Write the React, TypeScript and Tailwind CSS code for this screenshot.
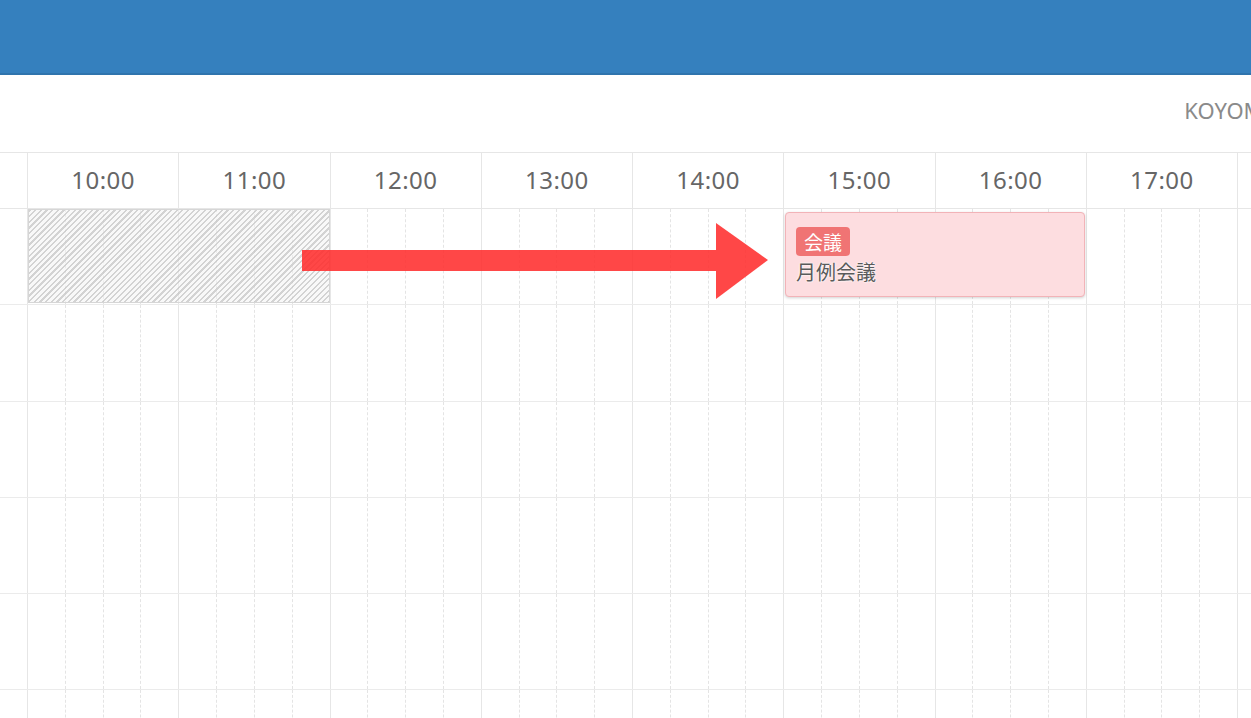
const HOURS = ["10:00", "11:00", "12:00", "13:00", "14:00", "15:00", "16:00", "17:00", ""];
const ROWS = [0, 1, 2, 3, 4, 5];

function HourCell({ quarters }: { quarters: boolean }) {
  return (
    <div className="flex h-full w-[151.25px] shrink-0 border-r border-[#e6e6e6]">
      {quarters &&
        [0, 1, 2, 3].map((q) => (
          <div
            key={q}
            className={
              q < 3
                ? "h-full flex-1 border-r border-dashed border-[#e4e4e4]"
                : "h-full flex-1"
            }
          />
        ))}
    </div>
  );
}

function Arrow() {
  return (
    <svg
      className="pointer-events-none absolute left-[302px] top-[13px] z-20"
      width="467"
      height="78"
      viewBox="0 0 467 78"
    >
      <g fill="#ff2e2e" fillOpacity="0.88">
        <rect x="0" y="28" width="414" height="21" />
        <polygon points="414,1 466,38 414,77" />
      </g>
    </svg>
  );
}

export default function App() {
  return (
    <div className="h-[718px] w-[1251px] overflow-hidden bg-white font-['Noto_Sans','Noto_Sans_CJK_JP',sans-serif]">
      <div className="h-[75px] border-b-2 border-[#2f74ad] bg-[#3580be]" />

      <div className="flex h-[77px] items-center justify-end overflow-hidden pb-[6px]">
        <span className="mr-[-20px] whitespace-nowrap text-[22px] text-[#8a8a8a]">
          KOYOMI
        </span>
      </div>

      <div className="flex h-[57px] border-y border-[#e6e6e6]">
        <div className="h-full w-[28px] shrink-0 border-r border-[#e6e6e6]" />
        {HOURS.map((h, i) => (
          <div
            key={i}
            className="flex h-full w-[151.25px] shrink-0 items-center justify-center border-r border-[#e6e6e6] pb-[2px] text-[24px] tracking-[0.5px] text-[#666]"
          >
            {h}
          </div>
        ))}
      </div>

      {ROWS.map((r) => (
        <div
          key={r}
          className="relative flex h-[96.3px] border-b border-[#ebebeb]"
        >
          <div className="h-full w-[28px] shrink-0 border-r border-[#e6e6e6]" />
          {HOURS.map((_, i) => (
            <HourCell key={i} quarters />
          ))}

          {r === 0 && (
            <>
              <div className="absolute left-[28px] top-0 h-[94px] w-[302px] border border-[#d6d6d6] bg-[repeating-linear-gradient(135deg,rgba(200,200,200,0.8)_0px,rgba(200,200,200,0.8)_1.6px,rgba(242,242,242,0.5)_1.6px,rgba(242,242,242,0.5)_4px)]" />

              <div className="absolute left-[785px] top-[3px] z-10 flex h-[85px] w-[300px] flex-col items-start rounded-[4px] border border-[#f2b3b8] bg-[#fddde0] px-[10px] pt-[14px] shadow-[0_1px_3px_rgba(0,0,0,0.18)]">
                <span className="flex h-[29px] items-center rounded-[4px] bg-[#f07474] px-[8px] font-['Noto_Sans_CJK_JP',sans-serif] text-[19px] leading-none text-white">
                  会議
                </span>
                <span className="mt-[3px] font-['Noto_Sans_CJK_JP',sans-serif] text-[20px] leading-[26px] text-[#5a5a5a] [text-shadow:0_0_2px_#fff,0_0_2px_#fff]">
                  月例会議
                </span>
              </div>

              <Arrow />
            </>
          )}
        </div>
      ))}
    </div>
  );
}
